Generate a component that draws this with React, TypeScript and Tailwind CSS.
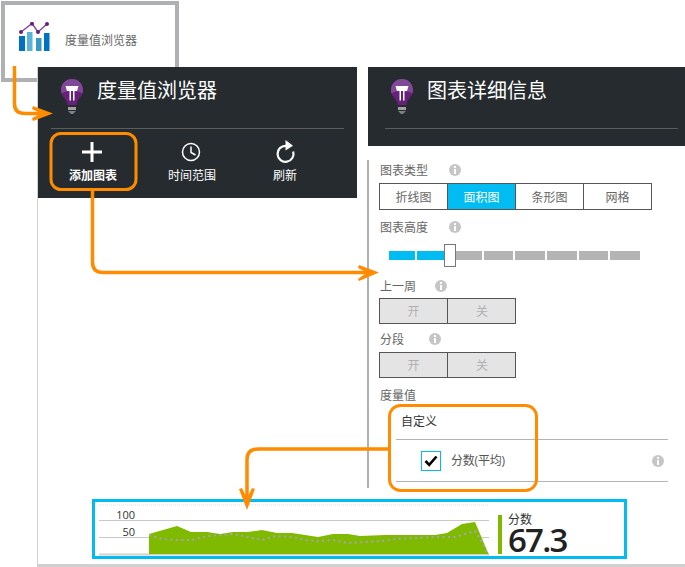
const CJK = "font-['Open_Sans','Noto_Sans_CJK_SC',sans-serif]";

function Bulb() {
  return (
    <svg width="24" height="36" viewBox="0 0 24 36" className="shrink-0">
      <path d="M12 0C5.900 0 1 4.900 1 11c0 4 1.900 6.500 3.800 8.800 1.400 1.700 2.500 3.700 2.900 6.200h8.600c.4-2.500 1.500-4.500 2.900-6.200C21.100 17.500 23 15 23 11 23 4.900 18.100 0 12 0z" fill="#68217a" />
      <path d="M12 0C5.900 0 1 4.900 1 11c0 1.300.2 2.400.5 3.400C4 12.800 8 12 12 12s8 .8 10.500 2.400c.3-1 .5-2.100.5-3.400C23 4.900 18.100 0 12 0z" fill="#804998" />
      <path d="M5.500 7H18.500L17 12H14.500V21.500H13V12H11V21.500H9.500V12H7L5.500 7Z" fill="#fff" />
      <rect x="8" y="28" width="8" height="3" fill="#a0a0a0" />
      <path d="M8 32h8l-3 3h-2z" fill="#808080" />
    </svg>
  );
}

function Info() {
  return (
    <svg width="12" height="12" viewBox="0 0 12 12" className="shrink-0">
      <circle cx="6" cy="6" r="6" fill="#c6c6c6" />
      <rect x="5" y="2" width="2" height="2" fill="#fff" />
      <rect x="5" y="5" width="2" height="5" fill="#fff" />
    </svg>
  );
}

function Label({ text, infoGap }: { text: string; infoGap: string }) {
  return (
    <div className="flex items-center h-[20px] pl-px text-[12px] leading-5 text-[#666]">
      <span className="pt-[2px]">{text}</span>
      <span className={infoGap}>
        <Info />
      </span>
    </div>
  );
}

function Toggle() {
  return (
    <div className="flex w-[137px] h-[26px] border border-[#555] bg-[#e4e4e4] text-[12px] text-[#b0b0b0]">
      <div className="w-[68px] pt-[2px] flex items-center justify-center border-r border-[#555]">开</div>
      <div className="flex-1 pt-[2px] pl-px flex items-center justify-center">关</div>
    </div>
  );
}

function Tool({ icon, text, className }: { icon: React.ReactNode; text: string; className: string }) {
  return (
    <div className={`w-[80px] flex flex-col items-center ${className}`}>
      <div className="h-[24px] flex items-center justify-center">{icon}</div>
      <div className="mt-[4px] text-[12px] leading-4 text-white">{text}</div>
    </div>
  );
}

function Slider() {
  const grey = ["w-[26px]", "w-[29px]", "w-[30px]", "w-[30px]", "w-[29px]", "w-[30px]"];
  return (
    <div className="flex items-center h-[23px] mt-[7px] pl-[10px]">
      <div className="w-[26px] h-[9px] bg-[#00bcf2]" />
      <div className="w-[28px] h-[9px] ml-[2px] bg-[#00bcf2]" />
      <div className="w-[12px] h-[23px] -ml-px bg-white border border-[#777]" />
      {grey.map((w, i) => (
        <div key={i} className={`${w} h-[9px] bg-[#b4b4b4] ${i === 0 ? "" : "ml-[2px]"}`} />
      ))}
    </div>
  );
}

function SparkChart() {
  const top =
    "0,27 28,19 42,25 58,25 71,27 84,25 99,25 113,23 128,26 143,26 169,30 184,27 199,27 211,29 236,28 246,28 286,28 298,26 313,17 326,15 340,48";
  const dots =
    "0,28 13,32 26,33 43,33 59,29 84,27 113,33 126,29 143,30 156,33 169,34 184,33 199,36 233,34 246,32 269,31 286,30 306,30 326,24 333,35 339,48";
  return (
    <div className="mt-[11px] ml-[54px] w-[535px] h-[60px] border-[3px] border-[#00bcf2] bg-white flex text-[#333]">
      <div className="relative w-[394px] h-full ml-[4px]">
        <svg width="390" height="54" viewBox="0 0 390 54" className="block">
          <path d="M0 3H390" stroke="#d5e3e8" strokeDasharray="1 1" />
          <path d="M0 18.500H390M0 35.500H390" stroke="#c8c8c8" />
          <path d="M0 52.500H394" stroke="#d0d0d0" strokeWidth="2" />
          <g transform="translate(50 5)">
            <polygon points={`${top} 340,47 0,47`} fill="#7fba00" />
            <polyline points={dots} fill="none" stroke="#a4a4bc" strokeWidth="2" strokeDasharray="2 3.500" />
          </g>
        </svg>
        <span className="absolute right-[358px] top-[5px] text-[11px] leading-4">100</span>
        <span className="absolute right-[358px] top-[22px] text-[11px] leading-4">50</span>
      </div>
      <div className="ml-[5px] mt-[13px] w-[4px] h-[39px] bg-[#7fba00]" />
      <div className="ml-[6px] flex flex-col">
        <span className="mt-[11px] text-[12px] leading-[14px] text-[#333]">分数</span>
        <span className="text-[33px] leading-[26px] font-semibold tracking-[-1.800px] text-[#222]">67.3</span>
      </div>
    </div>
  );
}

function Arrow({ d }: { d: string }) {
  return <path d={d} fill="none" stroke="#ff8c00" strokeWidth="3.500" />;
}

function Head({ points }: { points: string }) {
  return <polygon points={points} fill="#ff8c00" />;
}

export default function App() {
  return (
    <div className={`relative w-[685px] h-[567px] overflow-hidden bg-white ${CJK}`}>
      <div className="pt-px pl-px">
        <div className="w-[178px] h-[81px] border-4 border-[#aeb0b3] flex items-start bg-white">
          <svg width="32" height="32" viewBox="0 0 32 32" className="ml-[13px] mt-[17px] shrink-0">
            <rect x="1" y="14" width="6" height="15" fill="#0072c6" />
            <rect x="9" y="10" width="5.500" height="19" fill="#59b4d9" />
            <rect x="18" y="16" width="5.500" height="13" fill="#3999c6" />
            <rect x="26" y="11" width="5.500" height="18" fill="#0072c6" />
            <polyline points="3,10 14,1.500 20,10 29,2" fill="none" stroke="#804998" strokeWidth="1.500" />
            <circle cx="3" cy="10" r="2" fill="#68217a" />
            <circle cx="14" cy="1.800" r="2" fill="#68217a" />
            <circle cx="20" cy="10" r="2" fill="#68217a" />
            <circle cx="29" cy="2" r="2" fill="#68217a" />
          </svg>
          <span className="ml-[15px] mt-[27px] text-[12px] leading-[18px] text-[#666]">度量值浏览器</span>
        </div>
      </div>

      <div className="relative -mt-[15px] ml-[37px] h-[500px] border-l border-b-[3px] border-[#d0d0d0]">
        <div className="flex">
          <div className="w-[319px] h-[131px] bg-[#252b2e] px-[13px]">
            <div className="flex items-start h-[62px] border-b border-[#5c5c5c]">
              <div className="ml-[9px] mt-[12px]">
                <Bulb />
              </div>
              <h1 className="ml-[13px] mt-[10px] text-[20px] leading-7 font-normal text-white">度量值浏览器</h1>
            </div>
            <div className="flex pt-[11px]">
              <Tool
                className="ml-[2px] font-semibold"
                text="添加图表"
                icon={
                  <svg width="20" height="20" viewBox="0 0 20 20" className="mr-[2px]">
                    <path d="M10 0V20M0 10H20" stroke="#fff" strokeWidth="3" />
                  </svg>
                }
              />
              <Tool
                className="ml-[19px]"
                text="时间范围"
                icon={
                  <svg width="20" height="20" viewBox="0 0 20 20" className="mr-[3px]">
                    <circle cx="10" cy="10" r="8.500" fill="none" stroke="#fff" strokeWidth="1.500" />
                    <path d="M10 4.500V10.500L14.500 13" fill="none" stroke="#fff" strokeWidth="1.500" />
                  </svg>
                }
              />
              <Tool
                className="ml-[13px]"
                text="刷新"
                icon={
                  <svg width="22" height="24" viewBox="0 0 22 24">
                    <path d="M12 5.800A8 8 0 1 0 19.200 11.500" fill="none" stroke="#fff" strokeWidth="2.200" />
                    <path d="M11.500 0L19 5.800L11.500 10.500Z" fill="#fff" />
                  </svg>
                }
              />
            </div>
          </div>

          <div className="ml-[11px] w-[317px]">
            <div className="h-[79px] bg-[#252b2e] pl-[17px] pr-[7px]">
              <div className="flex items-start h-[62px] border-b border-[#5c5c5c]">
                <div className="ml-[5px] mt-[12px]">
                  <Bulb />
                </div>
                <h2 className="ml-[13px] mt-[10px] text-[20px] leading-7 font-normal text-white">图表详细信息</h2>
              </div>
            </div>
            <div className="mt-[14px] -ml-px h-[328px] border-l-2 border-[#aeb0b3] pl-[10px]">
              <Label text="图表类型" infoGap="ml-[21px]" />
              <div className="mt-[3px] flex w-[273px] h-[27px] border border-[#555] text-[12px] text-[#666]">
                <div className="w-[68px] pt-[2px] flex items-center justify-center border-r border-[#555]">折线图</div>
                <div className="w-[68px] pt-[2px] flex items-center justify-center bg-[#00bcf2] text-white border-r border-[#555]">面积图</div>
                <div className="w-[68px] pt-[2px] flex items-center justify-center border-r border-[#555]">条形图</div>
                <div className="flex-1 pt-[2px] flex items-center justify-center">网格</div>
              </div>
              <div className="mt-[7px]">
                <Label text="图表高度" infoGap="ml-[21px]" />
              </div>
              <Slider />
              <div className="mt-[9px]">
                <Label text="上一周" infoGap="ml-[19px]" />
              </div>
              <div className="mt-[2px]">
                <Toggle />
              </div>
              <div className="mt-[5px]">
                <Label text="分段" infoGap="ml-[25px]" />
              </div>
              <div className="mt-[3px]">
                <Toggle />
              </div>
              <div className="mt-[7px]">
                <Label text="度量值" infoGap="hidden" />
              </div>
              <div className="ml-[17px] w-[272px] mt-[6px] text-[12px]">
                <div className="h-[29px] pl-[5px] pt-px leading-5 text-[#333] border-b border-[#b4b4b4]">自定义</div>
                <div className="h-[42px] flex items-center border-b border-[#b4b4b4]">
                  <div className="ml-[25px] w-[20px] h-[20px] border border-[#00bcf2] flex items-center justify-center">
                    <svg width="14" height="12" viewBox="0 0 14 12">
                      <path d="M1.500 6L5.200 9.800L12.500 1.500" fill="none" stroke="#000" strokeWidth="2.600" />
                    </svg>
                  </div>
                  <span className="ml-[10px] text-[#555] tracking-[-0.200px]">分数(平均)</span>
                  <span className="ml-auto mr-[4px]">
                    <Info />
                  </span>
                </div>
              </div>
            </div>
          </div>
        </div>
        <SparkChart />
      </div>

      <svg width="685" height="567" viewBox="0 0 685 567" className="absolute inset-0 pointer-events-none">
        <rect x="51" y="133.500" width="85" height="56" rx="10" fill="none" stroke="#ff8c00" strokeWidth="3" />
        <rect x="389.500" y="405.500" width="147" height="85" rx="11" fill="none" stroke="#ff8c00" strokeWidth="3" />
        <Arrow d="M14.500 66V104Q14.500 113.500 25 113.500H46" />
        <Head points="53,113.500 33,106 32,109 41,113.500 32,118 33,121" />
        <Arrow d="M92.500 190V262Q92.500 272.500 103 272.500H372" />
        <Head points="379,272.500 359,265 358,268 367,272.500 358,279 359,281" />
        <Arrow d="M388 449H258Q247 449 247 460V502" />
        <Head points="247,510 239,489 242,488 247,498 252,488 255,489" />
      </svg>
    </div>
  );
}
